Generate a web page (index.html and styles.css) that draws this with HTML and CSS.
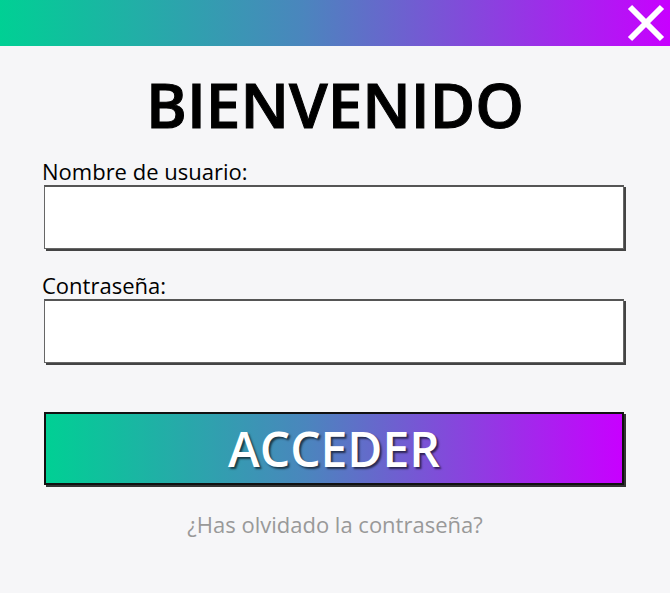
FILE: index.html
```html
<!DOCTYPE html>
<html lang="es">
<head>
<meta charset="utf-8">
<title>Bienvenido</title>
<link rel="stylesheet" href="styles.css">
</head>
<body>
<header class="topbar">
  <button class="close" aria-label="Cerrar">
    <svg width="38" height="38" viewBox="0 0 38 38"><path d="M3 3 L35 35 M35 3 L3 35" stroke="#fff" stroke-width="6" stroke-linecap="butt"/></svg>
  </button>
</header>
<main class="panel">
  <h1 class="title">BIENVENIDO</h1>
  <form class="form">
    <label class="field">
      <span class="label">Nombre de usuario:</span>
      <input class="input" type="text">
    </label>
    <label class="field">
      <span class="label">Contraseña:</span>
      <input class="input" type="password">
    </label>
    <button class="submit" type="button">ACCEDER</button>
  </form>
  <a class="forgot" href="#">¿Has olvidado la contraseña?</a>
</main>
</body>
</html>
```
FILE: styles.css
```css
html, body {
  margin: 0;
  padding: 0;
  background: #f6f6f8;
  font-family: "Open Sans", "Noto Sans", sans-serif;
}
.topbar {
  height: 46px;
  background: linear-gradient(90deg, #00d094 0%, #4a86bd 45%, #c800ff 100%);
  display: flex;
  justify-content: flex-end;
  align-items: center;
}
.close {
  background: none;
  border: 0;
  padding: 0;
  margin-right: 5px;
  width: 38px;
  height: 38px;
  display: block;
}
.close svg { display: block; }
.panel {
  display: flex;
  flex-direction: column;
  align-items: center;
}
.title {
  margin: 24px 0 0;
  font-family: "Open Sans", sans-serif;
  font-size: 62px;
  font-weight: 600;
  -webkit-text-stroke: 1px #000;
  line-height: 68px;
  color: #000;
}
.form {
  width: 584px;
  display: flex;
  flex-direction: column;
  margin-top: 20px;
  padding-left: 2px;
}
.field {
  display: flex;
  flex-direction: column;
}
.field + .field {
  margin-top: 23px;
}
.label {
  font-size: 22px;
  line-height: 27px;
  color: #000;
  margin-left: -2px;
}
.input {
  height: 64px;
  box-sizing: border-box;
  width: 580px;
  border: 1px solid #666;
  border-top: 2px solid #555;
  background: #fff;
  box-shadow: 2px 2px 0 #444;
  outline: none;
  margin: 0;
}
.submit {
  margin-top: 49px;
  width: 580px;
  height: 73px;
  box-sizing: border-box;
  border: 2px solid #111;
  background: linear-gradient(90deg, #00d094 0%, #4a86bd 45%, #c800ff 100%);
  box-shadow: 2px 2px 0 #333;
  color: #fff;
  font-family: "Open Sans", sans-serif;
  font-weight: 600;
  font-size: 48px;
  line-height: 69px;
  text-shadow: 2px 2px 2px rgba(0,0,0,0.6);
  padding: 0;
}
.forgot {
  margin-top: 25px;
  font-size: 22px;
  line-height: 28px;
  color: #999;
  text-decoration: none;
}
```
